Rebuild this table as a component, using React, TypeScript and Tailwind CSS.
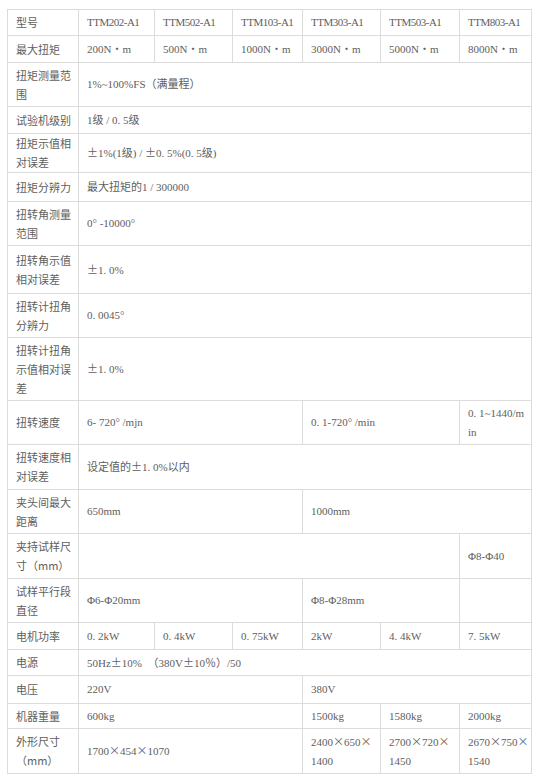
type Cell = { text?: React.ReactNode; span?: number };
type Row = { h: string; label: string; cells: Cell[]; tight?: boolean };

// × and ± are full-width in the reference, so they take the CJK face
const W = ({ s }: { s: string }): React.JSX.Element => (
  <>
    {s.split(/([×±])/).map((part, i) =>
      part === "×" || part === "±" ? (
        <span key={i} className="font-['Noto_Sans_CJK_SC',sans-serif]">
          {part}
        </span>
      ) : (
        part
      )
    )}
  </>
);

const rows: Row[] = [
  {
    h: "h-[26px]",
    label: "型号",
    tight: true,
    cells: [
      { text: "TTM202-A1" },
      { text: "TTM502-A1" },
      { text: "TTM103-A1" },
      { text: "TTM303-A1" },
      { text: "TTM503-A1" },
      { text: "TTM803-A1" },
    ],
  },
  {
    h: "h-[27px]",
    label: "最大扭矩",
    cells: [
      { text: "200N・m" },
      { text: "500N・m" },
      { text: "1000N・m" },
      { text: "3000N・m" },
      { text: "5000N・m" },
      { text: "8000N・m" },
    ],
  },
  { h: "h-[44px]", label: "扭矩测量范围", cells: [{ text: "1%~100%FS（满量程）", span: 6 }] },
  { h: "h-[27px]", label: "试验机级别", cells: [{ text: "1级 / 0. 5级", span: 6 }] },
  {
    h: "h-[39px]",
    label: "扭矩示值相对误差",
    cells: [{ text: <W s="±1%(1级) / ±0. 5%(0. 5级)" />, span: 6 }],
  },
  { h: "h-[29px]", label: "扭矩分辨力", cells: [{ text: "最大扭矩的1 / 300000", span: 6 }] },
  { h: "h-[44px]", label: "扭转角测量范围", cells: [{ text: "0° -10000°", span: 6 }] },
  { h: "h-[48px]", label: "扭转角示值相对误差", cells: [{ text: <W s="±1. 0%" />, span: 6 }] },
  { h: "h-[44px]", label: "扭转计扭角分辨力", cells: [{ text: "0. 0045°", span: 6 }] },
  { h: "h-[63px]", label: "扭转计扭角示值相对误差", cells: [{ text: <W s="±1. 0%" />, span: 6 }] },
  {
    h: "h-[44px]",
    label: "扭转速度",
    cells: [
      { text: "6- 720° /mjn", span: 3 },
      { text: "0. 1-720° /min", span: 2 },
      {
        text: (
          <>
            0. 1~1440/m
            <br />
            in
          </>
        ),
      },
    ],
  },
  {
    h: "h-[45px]",
    label: "扭转速度相对误差",
    cells: [{ text: <W s="设定值的±1. 0%以内" />, span: 6 }],
  },
  {
    h: "h-[44px]",
    label: "夹头间最大距离",
    cells: [
      { text: "650mm", span: 3 },
      { text: "1000mm", span: 3 },
    ],
  },
  {
    h: "h-[45px]",
    label: "夹持试样尺寸（mm）",
    cells: [{ span: 5 }, { text: "Φ8-Φ40" }],
  },
  {
    h: "h-[44px]",
    label: "试样平行段直径",
    cells: [{ text: "Φ6-Φ20mm", span: 3 }, { text: "Φ8-Φ28mm", span: 2 }, {}],
  },
  {
    h: "h-[27px]",
    label: "电机功率",
    cells: [
      { text: "0. 2kW" },
      { text: "0. 4kW" },
      { text: "0. 75kW" },
      { text: "2kW" },
      { text: "4. 4kW" },
      { text: "7. 5kW" },
    ],
  },
  {
    h: "h-[26px]",
    label: "电源",
    cells: [{ text: <W s="50Hz±10%　（380V±10％）/50" />, span: 6 }],
  },
  {
    h: "h-[28px]",
    label: "电压",
    cells: [
      { text: "220V", span: 3 },
      { text: "380V", span: 3 },
    ],
  },
  {
    h: "h-[25px]",
    label: "机器重量",
    cells: [{ text: "600kg", span: 3 }, { text: "1500kg" }, { text: "1580kg" }, { text: "2000kg" }],
  },
  {
    h: "h-[45px]",
    label: "外形尺寸（mm）",
    cells: [
      { text: <W s="1700×454×1070" />, span: 3 },
      {
        text: (
          <>
            <W s="2400×650×" />
            <br />
            1400
          </>
        ),
      },
      {
        text: (
          <>
            <W s="2700×720×" />
            <br />
            1450
          </>
        ),
      },
      {
        text: (
          <>
            <W s="2670×750×" />
            <br />
            1540
          </>
        ),
      },
    ],
  },
];

const border = "border border-[#dcdcdc] align-middle leading-[19px] text-left";

const App = (): React.JSX.Element => {
  return (
    <div className="min-h-[784px] w-[540px] bg-white pl-[7px] pt-[9px] font-['Liberation_Serif','Noto_Sans_CJK_SC',serif] text-[11px] text-[#5e5e5e]">
      <table className="w-[524px] table-fixed border-collapse">
        <colgroup>
          <col className="w-[71px]" />
          <col className="w-[76px]" />
          <col className="w-[78px]" />
          <col className="w-[70px]" />
          <col className="w-[78px]" />
          <col className="w-[79px]" />
          <col className="w-[72px]" />
        </colgroup>
        <tbody>
          {rows.map((row) => (
            <tr key={row.label} className={row.h}>
              <td className={`${border} pl-[8px] pr-[4px] font-['Noto_Sans_CJK_SC',sans-serif]`}>{row.label}</td>
              {row.cells.map((cell, i) => (
                <td
                  key={i}
                  colSpan={cell.span ?? 1}
                  className={`${border} whitespace-nowrap px-[8px] ${row.tight ? "tracking-[-0.5px]" : ""}`}
                >
                  {cell.text}
                </td>
              ))}
            </tr>
          ))}
        </tbody>
      </table>
    </div>
  );
};

export default App;
